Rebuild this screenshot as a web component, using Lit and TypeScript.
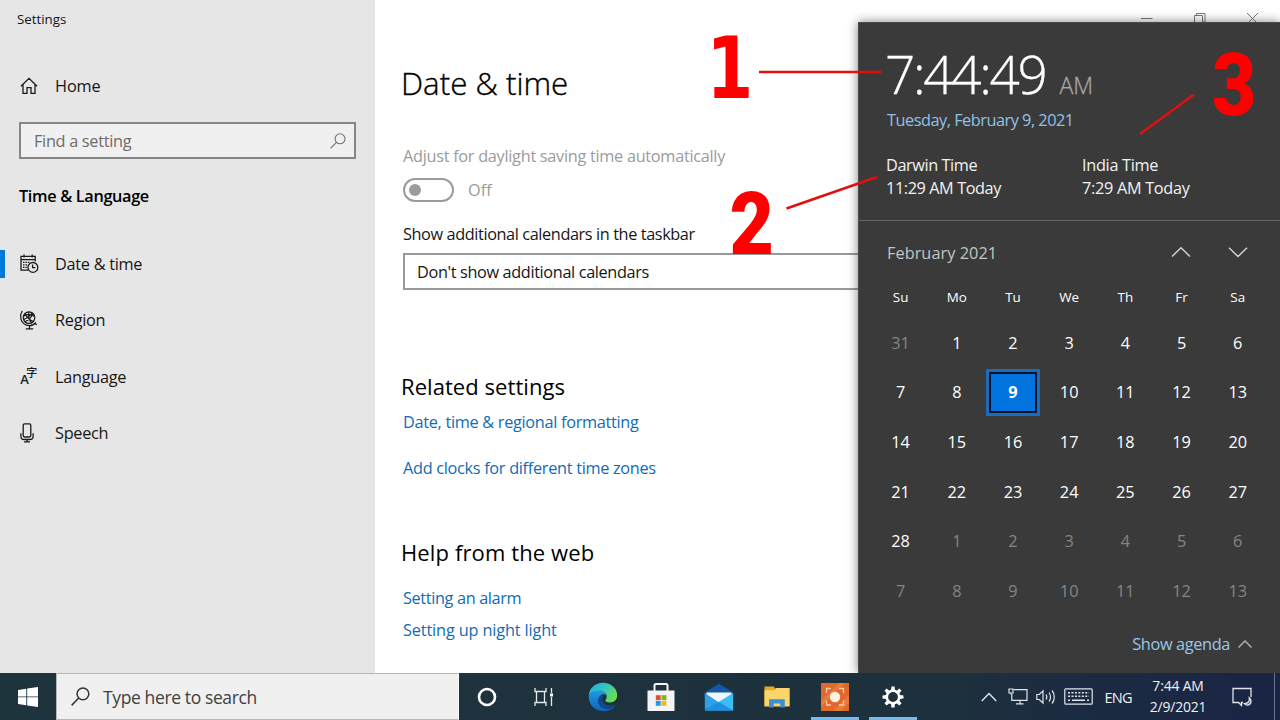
import { LitElement, html, css, svg } from "lit";
import { customElement } from "lit/decorators.js";
import { classMap } from "lit/directives/class-map.js";

const ui = css`
  :host { font-family: "Open Sans", "Noto Sans", sans-serif; box-sizing: border-box; }
  * { box-sizing: border-box; }
  svg { display: block; overflow: visible; flex: none; }
  span, a { white-space: nowrap; }
`;

const homeIcon = svg`<svg width="18" height="18" viewBox="0 0 18 18" fill="none" stroke="#1b1b1b" stroke-width="1.3">
  <path d="M.9 9.3 9 1.3l8.1 8M3 7.6v8.7h4v-5.6h4v5.6h4V7.6"/></svg>`;
const calIcon = svg`<svg width="19" height="20" viewBox="0 0 19 20" fill="none" stroke="#1b1b1b" stroke-width="1.3">
  <path d="M8 16.2H1V2.400h14.200v5M1 5.600h14.200M4 .4v3M12.200.4v3"/>
  <path d="M3 8.300h7M3 10.800h5M3 13.300h4.500" stroke-dasharray="1.500 .9"/>
  <circle cx="12.900" cy="13.400" r="4.900"/><path d="M12.600 10.400v3.300h2.800"/></svg>`;
const globeIcon = svg`<svg width="18" height="20" viewBox="0 0 18 20" fill="none" stroke="#1b1b1b" stroke-width="1.2">
  <circle cx="9" cy="7.6" r="5.8"/><path d="M5 3.4c2 4.400 5 7 9 8.400M12.800 3.400c-1.500 4.200-4 7-8 8.400M3.400 6.200c4-2.600 8-2.600 11.400.6M3.600 9.600c3.600-1.800 7-3.600 8.800-6.800M9 1.800c-1 4 0 8 2.600 11"/>
  <path d="M2.200.8C-.8 6 .4 12.400 6 14.900c4 1.500 7.600.2 9.800-2.400M14.400 13.200l2.400 1.600M9.500 15.200v3.200M5.800 18.800h7.400"/></svg>`;
const langIcon = svg`<svg width="18" height="20" viewBox="0 0 18 20" fill="#1b1b1b">
  <text class="la" x=".2" y="17.300">A</text><text class="lz" x="6.300" y="10">字</text></svg>`;
const micIcon = svg`<svg width="14" height="20" viewBox="0 0 14 20" fill="none" stroke="#1b1b1b" stroke-width="1.3">
  <rect x="3.200" y=".8" width="7.600" height="13.200" rx="1.4"/><path d="M.9 10.200v3c0 2 1.400 3.300 3.200 3.300h5.800c1.800 0 3.200-1.300 3.200-3.300v-3M7 16.500v2.700M4 18.800h6"/></svg>`;
const lens = (size: number, color: string, w: number) => svg`<svg width=${size} height=${size} viewBox="0 0 18 18" fill="none" stroke=${color} stroke-width=${w}>
  <circle cx="11.300" cy="6.500" r="5.600"/><path d="M7.300 10.500.6 17.400"/></svg>`;

@customElement("settings-sidebar")
class SettingsSidebar extends LitElement {
  static styles = [ui, css`
    :host { display: flex; flex-direction: column; width: 375px; background: #e6e6e6; color: #161616; font-size: 16.300px; }
    .caption { height: 38px; line-height: 38px; padding-left: 17px; font-size: 13.300px; }
    .row { display: flex; align-items: center; height: 56.200px; position: relative; letter-spacing: -.28px; }
    .home { height: 58px; margin-top: 19px; letter-spacing: -.1px; }
    .ico { width: 55px; padding-left: 20px; flex: none; }
    .search { margin: 7px 19px 0; height: 37px; border: 2px solid #868686; background: #f0f0f0; display: flex; align-items: center; justify-content: space-between; padding: 0 8px 0 13px; color: #6b6b6b; letter-spacing: -.3px; }
    .group { font-weight: 600; height: 36px; line-height: 36px; margin-top: 18.600px; padding-left: 19px; color: #000; letter-spacing: -.34px; }
    .nav { margin-top: 22.600px; }
    .on::before { content: ""; position: absolute; left: 0; top: 14px; width: 5px; height: 28px; background: #0078d7; }
    .la { font: 600 13px "Open Sans", sans-serif; }
    .lz { font: 500 11px "Noto Sans CJK SC", sans-serif; }
  `];
  items: [string, unknown][] = [["Date & time", calIcon], ["Region", globeIcon], ["Language", langIcon], ["Speech", micIcon]];
  render() {
    return html`
      <div class="caption">Settings</div>
      <div class="row home"><div class="ico">${homeIcon}</div><span>Home</span></div>
      <div class="search"><span>Find a setting</span>${lens(16, "#6f6f6f", 1.2)}</div>
      <div class="group">Time &amp; Language</div>
      <div class="nav">${this.items.map(([label, icon], i) => html`
        <div class=${classMap({ row: true, on: i === 0 })}><div class="ico">${icon}</div><span>${label}</span></div>`)}
      </div>`;
  }
}

@customElement("settings-page")
class SettingsPage extends LitElement {
  static styles = [ui, css`
    :host { display: flex; flex-direction: column; flex: 1; background: #fff; padding-left: 28px; font-size: 16.300px; color: #161616; position: relative; overflow: hidden; }
    .controls { position: absolute; right: 0; top: 12px; display: flex; gap: 40px; padding-right: 21px; }
    h1, h2 { margin: 0; font-weight: 400; color: #000; margin-left: -2px; }
    h1 { font-size: 31.300px; height: 50px; line-height: 50px; margin-top: 58px; font-weight: 300; -webkit-text-stroke: .35px #000; }
    h2 { font-size: 22px; height: 36px; line-height: 36px; }
    .line { height: 24px; line-height: 24px; }
    .adjust { margin-top: 36px; color: #9b9b9b; letter-spacing: -.285px; }
    .switch { display: flex; align-items: center; gap: 14px; height: 24px; margin-top: 10px; color: #9b9b9b; }
    .track { width: 51px; height: 24px; border: 2px solid #9b9b9b; border-radius: 12px; display: flex; align-items: center; padding-left: 4px; }
    .knob { width: 12px; height: 12px; border-radius: 50%; background: #9b9b9b; }
    .show { margin-top: 20px; letter-spacing: -.4px; }
    .combo { height: 37px; border: 2px solid #999; margin-top: 7px; width: 600px; display: flex; align-items: center; padding-left: 12px; letter-spacing: -.365px; }
    .related { margin-top: 77.500px; letter-spacing: .06px; }
    a { color: #0f6cb5; display: block; height: 24px; line-height: 24px; letter-spacing: -.3px; }
    .l1 { margin-top: 6.500px; }
    .l2 { margin-top: 22px; }
    .help { margin-top: 54px; letter-spacing: .12px; }
    .l3 { margin-top: 15.500px; letter-spacing: -.36px; }
    .l4 { margin-top: 8px; letter-spacing: -.14px; }
  `];
  render() {
    return html`
      <div class="controls">
        <svg width="13" height="12" viewBox="0 0 13 12"><path d="M1 6.500h11.500" stroke="#777"/></svg>
        <svg width="13" height="12" viewBox="0 0 13 12" fill="none" stroke="#777"><path d="M1.500 3.500h8v8h-8zM3.500 3V1.500h8.500v8.500h-2"/></svg>
        <svg width="13" height="12" viewBox="0 0 13 12"><path d="M1 1l11 11M12 1 1 12" stroke="#777"/></svg>
      </div>
      <h1>Date &amp; time</h1>
      <div class="line adjust">Adjust for daylight saving time automatically</div>
      <div class="switch"><div class="track"><div class="knob"></div></div><span>Off</span></div>
      <div class="line show">Show additional calendars in the taskbar</div>
      <div class="combo">Don't show additional calendars</div>
      <h2 class="related">Related settings</h2>
      <a class="l1">Date, time &amp; regional formatting</a>
      <a class="l2">Add clocks for different time zones</a>
      <h2 class="help">Help from the web</h2>
      <a class="l3">Setting an alarm</a>
      <a class="l4">Setting up night light</a>`;
  }
}

@customElement("clock-flyout")
class ClockFlyout extends LitElement {
  static styles = [ui, css`
    :host { display: flex; flex-direction: column; background: #3a3a3a; color: #fff; font-size: 16.300px; padding-top: 20.500px; box-shadow: 0 0 10px rgba(0,0,0,.5); border: 1px solid #4a4a4a; border-right: 0; border-bottom: 0; }
    .clock { display: flex; align-items: baseline; gap: 14px; padding-left: 26px; height: 60px; line-height: 60px; }
    .time { font-size: 53px; font-weight: 300; letter-spacing: -2.300px; -webkit-text-stroke: .3px #fff; }
    .ampm { font-size: 23px; color: #a8a8a8; font-weight: 300; -webkit-text-stroke: .3px #a8a8a8; }
    .date { height: 24px; line-height: 24px; margin-top: 4px; padding-left: 28px; color: #92c1e6; letter-spacing: -.48px; }
    .zones { display: grid; grid-template-columns: 196px auto; padding: 0 0 0 27px; margin-top: 22.500px; line-height: 22.700px; color: #f2f2f2; letter-spacing: -.42px; }
    .zones div { display: flex; flex-direction: column; }
    .zones .b { letter-spacing: -.3px; }
    .month { display: flex; align-items: center; height: 65px; margin-top: 20.500px; border-top: 1px solid #646464; padding: 0 32px 0 28px; color: #c4c4c4; letter-spacing: .05px; }
    .month span { flex: 1; }
    .month .down { margin-left: 37px; }
    .grid { display: grid; grid-template-columns: repeat(7, 56.200px); padding-left: 13.500px; justify-items: center; align-items: center; }
    .week { grid-auto-rows: 26px; font-size: 13.400px; margin-top: -.5px; }
    .days { grid-auto-rows: 49.650px; margin-top: 7.500px; }
    .off { color: #858585; }
    .sel { width: 54px; height: 47px; border: 3px solid #1a6cbd; background: #0073de; outline: 2px solid #04122c; outline-offset: -5px; display: flex; align-items: center; justify-content: center; font-weight: 700; }
    .agenda { display: flex; align-items: center; justify-content: flex-end; gap: 8px; height: 56px; padding-right: 28px; color: #9ac6ea; letter-spacing: -.35px; }
  `];
  days = [31, ...Array.from({ length: 28 }, (_, i) => i + 1), ...Array.from({ length: 13 }, (_, i) => i + 1)];
  render() {
    return html`
      <div class="clock"><span class="time">7:44:49</span><span class="ampm">AM</span></div>
      <div class="date">Tuesday, February 9, 2021</div>
      <div class="zones">
        <div><span>Darwin Time</span><span>11:29 AM Today</span></div>
        <div class="b"><span>India Time</span><span>7:29 AM Today</span></div>
      </div>
      <div class="month"><span>February 2021</span>
        <svg width="20" height="12" viewBox="0 0 20 12" fill="none" stroke="#d0d0d0" stroke-width="1.500"><path d="M1 9.500 10 .8l9 8.700"/></svg>
        <svg class="down" width="20" height="12" viewBox="0 0 20 12" fill="none" stroke="#d0d0d0" stroke-width="1.500"><path d="M1 .8l9 8.700 9-8.700"/></svg>
      </div>
      <div class="grid week">${["Su", "Mo", "Tu", "We", "Th", "Fr", "Sa"].map(d => html`<span>${d}</span>`)}</div>
      <div class="grid days">${this.days.map((d, i) => html`<span class=${classMap({ off: i === 0 || i > 28, sel: i === 9 })}>${d}</span>`)}</div>
      <div class="agenda"><span>Show agenda</span>
        <svg width="14" height="9" viewBox="0 0 14 9" fill="none" stroke="#b0b8be" stroke-width="1.400"><path d="M.5 8.500 7 2l6.500 6.500"/></svg>
      </div>`;
  }
}

@customElement("task-bar")
class TaskBar extends LitElement {
  static styles = [ui, css`
    :host { display: flex; height: 47px; background: linear-gradient(90deg, #1e343d 0, #1d313c 920px, #1c2c41 1060px, #1a2444 1280px); color: #f0f0f0; }
    .start { width: 56px; display: flex; align-items: center; justify-content: center; }
    .search { width: 403px; background: #f0f0f0; border: 1px solid #b4b8ba; border-right-color: #fff; display: flex; align-items: center; gap: 13px; padding-left: 14px; font-size: 17.500px; color: #404040; letter-spacing: -.38px; }
    .apps { display: flex; margin-left: -1px; }
    .app { width: 58px; display: flex; align-items: center; justify-content: center; border-bottom: 3px solid transparent; border-top: 3px solid transparent; }
    .run { background: linear-gradient(#76b9ed, #76b9ed) center bottom / 48px 3px no-repeat border-box; }
    .tray { flex: 1; display: flex; align-items: center; padding-left: 59px; font-size: 14.600px; letter-spacing: -.8px; }
    .net { margin-left: 11px; } .vol { margin-left: 8px; } .kbd { margin-left: 8px; }
    .eng { width: 27px; margin-left: 11.500px; }
    .when { width: 93px; text-align: center; line-height: 21px; font-size: 13.900px; letter-spacing: -.15px; display: flex; flex-direction: column; padding-bottom: 1px; }
    .note { margin-left: 7px; }
    .peek { margin-left: auto; width: 6px; height: 100%; border-left: 1px solid #68728c; }
  `];
  apps = [
    svg`<svg width="20" height="20" viewBox="0 0 20 20"><circle cx="10" cy="10" r="8" fill="none" stroke="#fff" stroke-width="2.600"/></svg>`,
    svg`<svg width="22" height="20" viewBox="0 0 22 20" fill="none" stroke="#e4e8ea" stroke-width="1.300"><path d="M1 1v3.500h11V1M1 19v-3.500h11V19M2.500 4.500v11M10.500 4.500v11M17.500 1v5M17.500 10v9"/><rect x="16" y="6.500" width="3" height="3" fill="#fff" stroke="none"/></svg>`,
    svg`<svg width="30" height="30" viewBox="0 0 30 30"><defs>
      <linearGradient id="eg" x1="0" y1="0" x2="1" y2=".6"><stop offset="0" stop-color="#2aa7e0"/><stop offset=".5" stop-color="#33c4c8"/><stop offset="1" stop-color="#6bdd4c"/></linearGradient>
      <linearGradient id="eb" x1="0" y1="0" x2="0" y2="1"><stop offset="0" stop-color="#1b9de2"/><stop offset="1" stop-color="#1560b8"/></linearGradient></defs>
      <path d="M.8 13C1.500 6 7.500.8 15 .8c8 0 14.200 5.600 14.200 12.400 0 4.300-3 7.200-7.200 7.200-3 0-5-1-4.600-2.400.4-1 1.300-1.600 1.300-3.600C18.700 11 15 9 10.500 9 6 9 2.500 10.500.8 13z" fill="url(#eg)"/>
      <path d="M.8 13C2.500 10 6 8.400 10 8.400c4.500 0 8 2 8.600 4.800-2-1.400-4.700-1-6.400.8-3 3.200-2 9 2.800 11.600 4 2 8.600 1.200 12-1.400-2.700 3.400-7 5-12 5C7 29 .8 23 .8 15z" fill="url(#eb)"/>
      <path d="M12.200 14c-4 3.500-2.500 10 2.800 12.300 4 1.700 8.600.8 12-2.100.8-.8 0-1.600-1-1.200-2.500 1-6.200 1-9-1-3-2.200-3.400-5.500-1.600-7.800-1.200-.8-2.400-.7-3.200-.2z" fill="#104a8e"/></svg>`,
    svg`<svg width="28" height="30" viewBox="0 0 28 30"><path d="M7.500 9V3.600C7.500 2.500 8 2 9 2h10c1 0 1.500.5 1.500 1.600V9" fill="none" stroke="#f4f4f4" stroke-width="2"/><path d="M.5 8.500h27V29h-27z" fill="#f4f4f4"/><path d="M8.800 13.200h4.900v4.900H8.800z" fill="#e0512b"/><path d="M14.500 13.200h4.900v4.900h-4.900z" fill="#7ab51d"/><path d="M8.800 18.900h4.900v4.900H8.800z" fill="#1c9be0"/><path d="M14.500 18.900h4.900v4.900h-4.900z" fill="#f7b51b"/></svg>`,
    svg`<svg width="30" height="28" viewBox="0 0 30 28"><path d="M.8 9.500 15 .8l14.200 8.700V14H.8z" fill="#1558a8"/><path d="M2.500 9.500h25V20h-25z" fill="#f1f6fa"/><path d="M.8 10 15 19.500.8 27z" fill="#2f9fe6"/><path d="M29.200 10v17.500H.8z" fill="#39bdf3"/><path d="M.8 27.500h28.400L14.600 18.800z" fill="#1f90e0"/></svg>`,
    svg`<svg width="26" height="24" viewBox="0 0 26 24"><path d="M.5 1.500h9l2.300 2.300h13.700V21H.5z" fill="#e8a91e"/><path d="M.5 5.300h10L12.300 3h13.200v18.500H.5z" fill="#fbd56b"/><path d="M5 22.500v-8.300h15.800v8.300h-4.600v-4H9.700v4z" fill="#3e8fd2"/></svg>`,
    svg`<svg width="28" height="28" viewBox="0 0 28 28"><path d="M0 0h28v28H0z" fill="#e0682b"/><path d="M0 18 18 0h6L0 24zM12 28 28 12v8l-8 8z" fill="#ea8148" opacity=".7"/><path d="M5.500 10V5.500H10M18 5.500h4.500V10M22.500 17.500V22H18M10 22H5.500v-4.500" fill="none" stroke="#f7c9a8" stroke-width="1.300"/><circle cx="14" cy="14" r="5.200" fill="#fff3df"/></svg>`,
    svg`<svg width="22" height="22" viewBox="-11 -11 22 22"><circle r="6.200" fill="none" stroke="#fff" stroke-width="2.600"/>${[0, 45, 90, 135, 180, 225, 270, 315].map(a => svg`<path d="M-1.900-6.700-1.600-10.500h3.200l.3 3.800z" fill="#fff" transform="rotate(${a})"/>`)}</svg>`,
  ];
  render() {
    return html`
      <div class="start"><svg width="20" height="20" viewBox="0 0 20 20" fill="#fff"><path d="M0 2.900 8.300 1.700V9.500H0zM9.200 1.600 20 0v9.500H9.200zM0 10.300h8.300v7.900L0 17zM9.200 10.300H20V20l-10.800-1.600z"/></svg></div>
      <div class="search">${lens(19, "#333", 1.4)}<span>Type here to search</span></div>
      <div class="apps">${this.apps.map((a, i) => html`<div class=${classMap({ app: true, run: i > 5 })}>${a}</div>`)}</div>
      <div class="tray">
        <svg width="16" height="10" viewBox="0 0 16 10" fill="none" stroke="#e0e4ea" stroke-width="1.400"><path d="M.8 9 8 1.500 15.200 9"/></svg>
        <svg class="net" width="20" height="17" viewBox="0 0 20 17" fill="none" stroke="#e0e4ea" stroke-width="1.200"><path d="M5.500 1.600H19v10.800H3.800V6M12 12.500v3M8 15.800h7.500"/><path d="M1 1h4v4H1zM3 5v1.500"/></svg>
        <svg class="vol" width="20" height="16" viewBox="0 0 20 16" fill="none" stroke="#e0e4ea" stroke-width="1.200"><path d="M.8 5.500h2.500L7 2v12l-3.700-3.500H.8zM10 5.500c1 1.500 1 3.500 0 5M13 3.500c2 2.500 2 6.500 0 9M16 1.500c3 3.500 3 9.500 0 13"/></svg>
        <svg class="kbd" width="29" height="17" viewBox="0 0 29 17" fill="none" stroke="#e0e4ea" stroke-width="1.200"><rect x=".8" y=".8" width="27.400" height="15.400" rx="1"/><path d="M4 4.800h21M4 8.300h21" stroke-width="1.500" stroke-dasharray="2 1.450"/><path d="M4 12.200h2M8 12.200h13M23 12.200h2" stroke-width="1.500"/></svg>
        <span class="eng">ENG</span>
        <div class="when"><span>7:44 AM</span><span>2/9/2021</span></div>
        <svg class="note" width="20" height="20" viewBox="0 0 20 20" fill="none" stroke="#e0e4ea" stroke-width="1.300"><path d="M19 10V1.500H1v14h5.500l3 3v-3h1.500"/><path d="M17.300 10.800c.6 3.200-1.300 5.600-5 5.800 2.200 2.600 6.700 1.600 6.700-2 0-1.600-.6-2.900-1.700-3.800z" fill="#e0e4ea" fill-opacity=".35"/></svg>
        <div class="peek"></div>
      </div>`;
  }
}

@customElement("app-root")
class AppRoot extends LitElement {
  static styles = [ui, css`
    :host { display: flex; flex-direction: column; width: 1280px; height: 720px; position: relative; overflow: hidden; }
    .window { display: flex; height: 673px; position: relative; overflow: hidden; }
    clock-flyout { position: absolute; left: 858px; top: 22px; width: 422px; height: 651px; }
    .marks { position: absolute; left: 0; top: 0; }
    .one { font: 700 85px "DejaVu Sans", sans-serif; }
    .num { font: 900 87px Roboto, sans-serif; }
  `];
  render() {
    return html`
      <div class="window"><settings-sidebar></settings-sidebar><settings-page></settings-page><clock-flyout></clock-flyout></div>
      <task-bar></task-bar>
      <svg class="marks" width="1280" height="720" viewBox="0 0 1280 720">
        <g stroke="#e01010" stroke-width="2.600"><path d="M759 72h122M786.500 208.500 877 177M1140 134l54-39.500"/></g>
        <g fill="#fe0000">
          <text class="one" transform="translate(706.500 98) scale(.79 1)">1</text>
          <text class="num" transform="translate(729.500 254) scale(.88 1)">2</text>
          <text class="num" transform="translate(1212 115) scale(.88 1)">3</text>
        </g>
      </svg>`;
  }
}
